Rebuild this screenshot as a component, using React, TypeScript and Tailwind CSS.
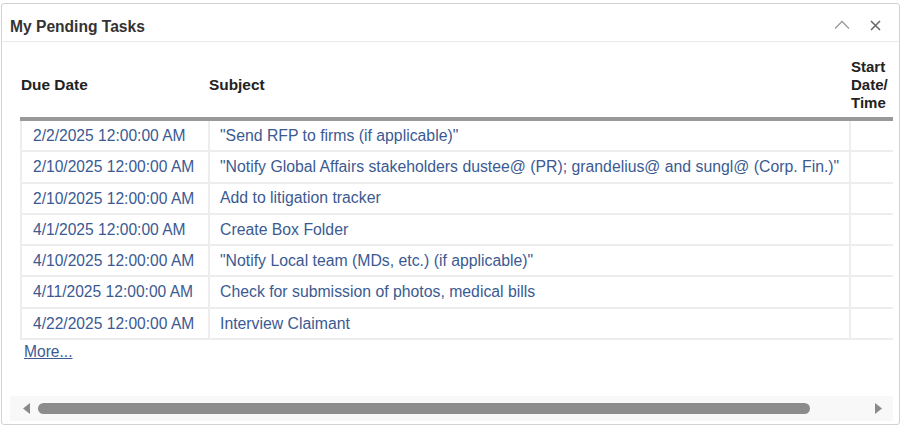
import React from 'react';

interface Task {
  due: string;
  subject: string;
}

const tasks: Task[] = [
  { due: '2/2/2025 12:00:00 AM', subject: '"Send RFP to firms (if applicable)"' },
  {
    due: '2/10/2025 12:00:00 AM',
    subject: '"Notify Global Affairs stakeholders dustee@ (PR); grandelius@ and sungl@ (Corp. Fin.)"',
  },
  { due: '2/10/2025 12:00:00 AM', subject: 'Add to litigation tracker' },
  { due: '4/1/2025 12:00:00 AM', subject: 'Create Box Folder' },
  { due: '4/10/2025 12:00:00 AM', subject: '"Notify Local team (MDs, etc.) (if applicable)"' },
  { due: '4/11/2025 12:00:00 AM', subject: 'Check for submission of photos, medical bills' },
  { due: '4/22/2025 12:00:00 AM', subject: 'Interview Claimant' },
];

export default function App() {
  return (
    <div
      className="w-[902px] h-[426px] bg-white pt-[3px] pl-[1px] pr-[2px] pb-[1px]"
      style={{ fontFamily: '"Liberation Sans", Arial, sans-serif' }}
    >
      <div className="h-full flex flex-col border border-[#d2d2d2] rounded-[3px] bg-white">
        {/* title bar */}
        <div className="h-[38px] flex items-center justify-between pl-[8px] pr-[18px] border-b border-[#ebebeb] shrink-0">
          <h2 className="text-[15.6px] font-bold text-[#333] pt-[8px]">My Pending Tasks</h2>
          <div className="flex items-center gap-[20px] pt-[5px]">
            <svg width="16" height="10" viewBox="0 0 16 10" fill="none">
              <path d="M1 8.5L8 1.5L15 8.5" stroke="#9a9a9a" strokeWidth="1.3" />
            </svg>
            <svg width="11" height="11" viewBox="0 0 11 11" fill="none">
              <path d="M1 1L10 10M10 1L1 10" stroke="#666" strokeWidth="1.5" />
            </svg>
          </div>
        </div>

        {/* body */}
        <div className="flex-1 flex flex-col pl-[18px]">
          <div className="w-[873px]">
            <div className="grid grid-cols-[188px_641px_44px] pt-[16px] pb-[5px] text-[15px] font-bold text-[#222] leading-[18px]">
              <div className="self-center pl-[1px] text-[15.4px]">Due Date</div>
              <div className="self-center pl-[1px] text-[15.4px]">Subject</div>
              <div className="pl-[2px]">
                Start
                <br />
                Date/
                <br />
                Time
              </div>
            </div>
            <div className="h-[4px] bg-[#999]" />
            {tasks.map((t, i) => (
              <div
                key={i}
                className="grid grid-cols-[188px_641px_44px] h-[31.3px] border-b-2 border-l-2 border-[#ededed] text-[#3b5a92]"
              >
                <div className="flex items-center pl-[11px] border-r-2 border-[#ededed] whitespace-nowrap text-[15.6px]">
                  {t.due}
                </div>
                <div className="flex items-center pl-[10px] border-r-2 border-[#ededed] whitespace-nowrap text-[15.8px]">
                  {t.subject}
                </div>
                <div />
              </div>
            ))}
          </div>
          <a href="#" className="mt-[3px] ml-[4px] w-fit text-[15.6px] text-[#3d5a91] underline leading-[18px]">
            More...
          </a>

          {/* horizontal scrollbar */}
          <div className="mt-auto mb-[3px] -ml-[10px] w-[883px] h-[25px] bg-[#f8f8f8] flex items-center">
            <div className="w-[28px] flex justify-center pl-[4px]">
              <svg width="7" height="11" viewBox="0 0 7 11">
                <path d="M7 0L0 5.5L7 11Z" fill="#8a8a8a" />
              </svg>
            </div>
            <div className="w-[772px] h-[11px] rounded-full bg-[#8c8c8c]" />
            <div className="flex-1 flex justify-end pr-[11px]">
              <svg width="7" height="11" viewBox="0 0 7 11">
                <path d="M0 0L7 5.5L0 11Z" fill="#8a8a8a" />
              </svg>
            </div>
          </div>
        </div>
      </div>
    </div>
  );
}
